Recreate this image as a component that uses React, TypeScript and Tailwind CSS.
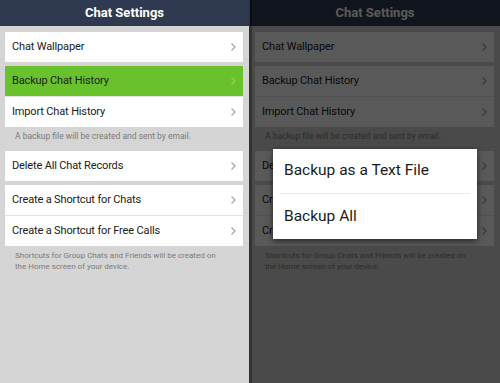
import React from "react";

const Chevron = ({ green }: { green?: boolean }) => (
  <svg width="7" height="10" viewBox="0 0 7 10" className="shrink-0">
    <polyline
      points="1.5,1.5 5,5 1.5,8.5"
      fill="none"
      stroke={green ? "#8fd45a" : "#a8a8a8"}
      strokeWidth="1.3"
    />
  </svg>
);

const Row = ({ label, green }: { label: string; green?: boolean }) => (
  <div
    className={`h-[30px] flex items-center justify-between pl-[7px] pr-[6px] ${
      green ? "bg-[#69c22c]" : "bg-white"
    }`}
  >
    <span className="text-[11px] tracking-[-0.15px] text-[#202020]">{label}</span>
    <Chevron green={green} />
  </div>
);

const Divider = () => <div className="h-px bg-[#e4e4e4]" />;

const Panel = ({ highlight }: { highlight: boolean }) => (
  <div className="flex flex-col h-full">
    <div className="h-[26px] bg-[#2f3a51] flex items-center justify-center">
      <span className="text-white font-bold text-[13px]">Chat Settings</span>
    </div>
    <div className="pl-[5px] pr-[6px] pt-[6px] flex flex-col">
      <Row label="Chat Wallpaper" />
      <div className="h-[4px]" />
      <Row label="Backup Chat History" green={highlight} />
      <Divider />
      <Row label="Import Chat History" />
      <div className="pl-[10px] pt-[4px] pb-[9px] text-[8.5px] leading-[11px] text-[#7b7b7b]">
        A backup file will be created and sent by email.
      </div>
      <Row label="Delete All Chat Records" />
      <div className="h-[4px]" />
      <Row label="Create a Shortcut for Chats" />
      <Divider />
      <Row label="Create a Shortcut for Free Calls" />
      <div className="pl-[10px] pt-[4px] text-[8px] leading-[11px] text-[#7b7b7b]">
        Shortcuts for Group Chats and Friends will be created on
        <br />
        the Home screen of your device.
      </div>
    </div>
  </div>
);

export default function App() {
  return (
    <div
      className="w-[500px] h-[383px] flex overflow-hidden bg-[#d4d4d4]"
      style={{ fontFamily: "Roboto, 'Liberation Sans', sans-serif" }}
    >
      <div className="w-[249px] h-full bg-[#d5d5d5]">
        <Panel highlight={true} />
      </div>
      <div className="relative w-[251px] h-full bg-[#d5d5d5]">
        <div className="pl-[1px] h-full">
          <Panel highlight={false} />
        </div>
        <div className="absolute inset-0 bg-black/65" />
        <div className="absolute left-0 top-0 bottom-0 w-[3px] bg-black/30" />
        <div className="absolute left-[24px] top-[149px] w-[204px] h-[90px] bg-white shadow-[0_2px_6px_rgba(0,0,0,0.6)] flex flex-col">
          <div className="h-[44px] flex items-center pl-[11px] text-[15.5px] text-[#1a1a1a]">
            Backup as a Text File
          </div>
          <div className="mx-[7px] h-px bg-[#ececec]" />
          <div className="h-[45px] flex items-center pl-[11px] text-[15.5px] text-[#1a1a1a]">
            Backup All
          </div>
        </div>
      </div>
    </div>
  );
}
